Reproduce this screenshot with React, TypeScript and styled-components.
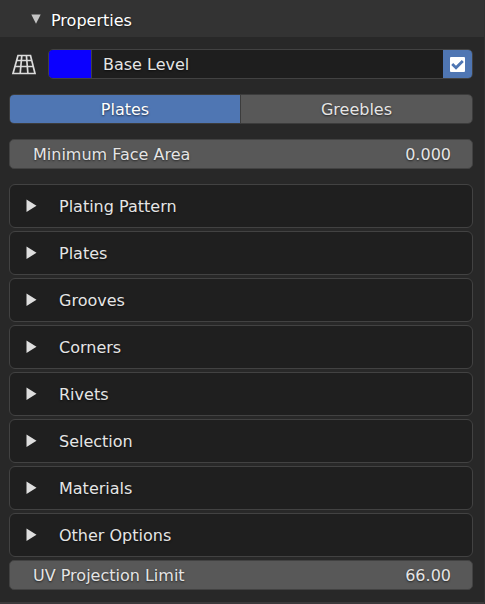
import React, { useState } from "react";
import styled, { createGlobalStyle } from "styled-components";

const GlobalStyle = createGlobalStyle`
  *, *::before, *::after { box-sizing: border-box; }
  body { margin: 0; background: #282828; }
  button, input { font: inherit; color: inherit; text-shadow: inherit; }
`;

const Panel = styled.section`
  min-height: 100vh;
  display: flex;
  flex-direction: column;
  background: #282828;
  border-right: 1px solid #303030;
  color: #e5e5e5;
  font: 16px/20px "DejaVu Sans", sans-serif;
  text-shadow: 0 1px 2px rgba(0, 0, 0, 0.6);
`;

const Header = styled.button`
  display: flex;
  align-items: center;
  gap: 10px;
  height: 37px;
  padding: 5px 31px 0;
  border: 0;
  background: #333333;
  color: #ffffff;
  text-align: left;
`;

const HeaderArrow = styled.svg`
  width: 10px;
  height: 10px;
  margin-bottom: 4px;
  fill: #c4c4c4;
`;

const Body = styled.div`
  display: flex;
  flex-direction: column;
  gap: 15px;
  padding: 12px 11px 12px 9px;
`;

const LevelRow = styled.div`
  display: flex;
  align-items: center;
  gap: 9px;
  height: 30px;
`;

const GridIcon = styled.svg`
  width: 30px;
  height: 24px;
  flex: none;
  fill: none;
  stroke: #dcdcdc;
  stroke-width: 1.7;
`;

const LevelField = styled.div`
  display: flex;
  flex: 1;
  min-width: 0;
  height: 30px;
  overflow: hidden;
  border: 1px solid #424242;
  border-radius: 5px;
  background: #1e1e1e;
`;

const Swatch = styled.button`
  width: 43px;
  flex: none;
  padding: 0;
  border: 0;
  border-right: 1px solid #424242;
  background: #0b00ff;
`;

const NameInput = styled.input`
  flex: 1;
  min-width: 0;
  padding: 2px 11px 0;
  border: 0;
  outline: 0;
  background: transparent;
`;

const Toggle = styled.label`
  display: flex;
  align-items: center;
  justify-content: center;
  width: 29px;
  flex: none;
  background: #4f76b3;
`;

const ToggleInput = styled.input`
  appearance: none;
  width: 0;
  height: 0;
  margin: 0;
`;

const Tick = styled.svg`
  width: 15px;
  height: 15px;
  fill: none;
  stroke: #4f76b3;
  stroke-width: 2.8;
`;

const Tabs = styled.div`
  display: grid;
  grid-template-columns: 1fr 1fr;
  height: 30px;
  overflow: hidden;
  border: 1px solid #3c3c3c;
  border-radius: 5px;
`;

const Tab = styled.button<{ $active: boolean }>`
  padding: 2px 0 0;
  border: 0;
  background: ${(p) => (p.$active ? "#4f76b3" : "#585858")};
  color: ${(p) => (p.$active ? "#ffffff" : "#e5e5e5")};

  &:first-child { border-right: 1px solid #3c3c3c; }
`;

const NumberRow = styled.label`
  display: flex;
  align-items: center;
  justify-content: space-between;
  height: 30px;
  padding: 2px 21px 0 23px;
  border: 1px solid #424242;
  border-radius: 5px;
  background: #585858;
`;

const NumberInput = styled.input`
  width: 80px;
  padding: 0;
  border: 0;
  outline: 0;
  background: transparent;
  text-align: right;
`;

const Sections = styled.div`
  display: flex;
  flex-direction: column;
  gap: 3px;
`;

const SectionButton = styled.button`
  display: flex;
  align-items: center;
  gap: 22px;
  height: 44px;
  padding: 0 16px;
  border: 1px solid #424242;
  border-radius: 6px;
  background: #1f1f1f;
  text-align: left;
`;

const SectionName = styled.span`
  padding-top: 2px;
`;

const SectionArrow = styled.svg`
  width: 11px;
  height: 14px;
  fill: #dedede;
`;

const Footer = styled.div`
  height: 2px;
  margin-top: auto;
  background: #3b393a;
`;

const sections = [
  "Plating Pattern",
  "Plates",
  "Grooves",
  "Corners",
  "Rivets",
  "Selection",
  "Materials",
  "Other Options",
];

function NumberField({ label, initial }: { label: string; initial: string }) {
  return (
    <NumberRow>
      <span>{label}</span>
      <NumberInput type="text" inputMode="decimal" defaultValue={initial} />
    </NumberRow>
  );
}

export default function App() {
  const [tab, setTab] = useState("Plates");
  const [enabled, setEnabled] = useState(true);

  return (
    <Panel>
      <GlobalStyle />
      <Header type="button" aria-expanded="true">
        <HeaderArrow viewBox="0 0 10 10" aria-hidden="true">
          <path d="M0.3 0.5H9.7L5 9.7Z" />
        </HeaderArrow>
        Properties
      </Header>
      <Body>
        <LevelRow>
          <GridIcon viewBox="0 0 30 24" aria-hidden="true">
            <path d="M9 3.5H21.5L26 21.5H4ZM7.6 8.5H22.6M6 14.5H24M12.8 3.5L11.2 21.5M17.4 3.5L18.9 21.5" />
          </GridIcon>
          <LevelField>
            <Swatch type="button" aria-label="Level colour" />
            <NameInput type="text" aria-label="Level name" defaultValue="Base Level" />
            <Toggle>
              <ToggleInput
                type="checkbox"
                aria-label="Enable level"
                checked={enabled}
                onChange={(e) => setEnabled(e.target.checked)}
              />
              <Tick viewBox="0 0 15 15" aria-hidden="true">
                <rect width="15" height="15" rx="1" fill="#ffffff" stroke="none" />
                {enabled && <path d="M2.2 7.1L6 10.7L12.8 3.9" />}
              </Tick>
            </Toggle>
          </LevelField>
        </LevelRow>
        <Tabs role="tablist">
          {["Plates", "Greebles"].map((name) => (
            <Tab
              key={name}
              type="button"
              role="tab"
              aria-selected={tab === name}
              $active={tab === name}
              onClick={() => setTab(name)}
            >
              {name}
            </Tab>
          ))}
        </Tabs>
        <NumberField label="Minimum Face Area" initial="0.000" />
        <Sections>
          {sections.map((name) => (
            <SectionButton key={name} type="button" aria-expanded="false">
              <SectionArrow viewBox="0 0 11 14" aria-hidden="true">
                <path d="M0.5 0.5L10.5 6.8L0.5 13Z" />
              </SectionArrow>
              <SectionName>{name}</SectionName>
            </SectionButton>
          ))}
          <NumberField label="UV Projection Limit" initial="66.00" />
        </Sections>
      </Body>
      <Footer />
    </Panel>
  );
}
